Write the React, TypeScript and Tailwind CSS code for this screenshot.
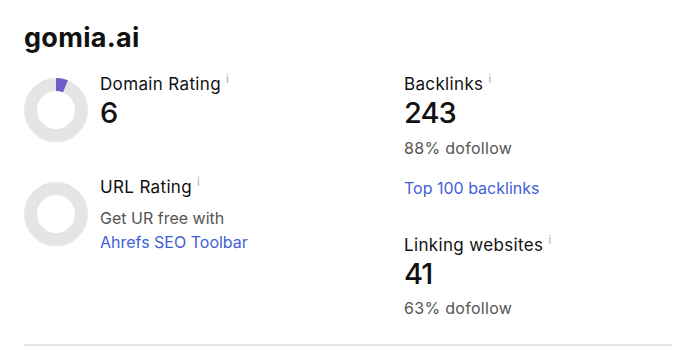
import React from "react";

function Donut({ value }: { value: number }) {
  const r = 25.5;
  const c = 2 * Math.PI * r;
  return (
    <svg width="64" height="64" viewBox="0 0 64 64" className="shrink-0">
      <circle cx="32" cy="32" r={r} fill="none" stroke="#e5e5e5" strokeWidth="13" />
      {value > 0 && (
        <circle
          cx="32"
          cy="32"
          r={r}
          fill="none"
          stroke="#6e5cc9"
          strokeWidth="13"
          strokeDasharray={`${(c * value) / 100} ${c}`}
          transform="rotate(-90 32 32)"
        />
      )}
    </svg>
  );
}

function Label({ children }: { children: React.ReactNode }) {
  return (
    <div className="flex items-start text-[17px] leading-6 tracking-[0.35px] text-[#111]">
      <span>{children}</span>
      <span className="ml-[5px] mt-[-1px] text-[11px] leading-4 text-[#aaa]">i</span>
    </div>
  );
}

export default function App() {
  return (
    <div className="h-[350px] w-[696px] bg-white px-6 pt-[22px]" style={{ fontFamily: "Inter, 'Noto Sans', sans-serif" }}>
      <h1 className="text-[27px] font-bold leading-8 tracking-[0.3px] text-[#111]">gomia.ai</h1>
      <div className="mt-[18px] flex">
        <div className="w-[380px]">
          <div className="flex gap-3">
            <div className="pt-[6px]"><Donut value={6} /></div>
            <div>
              <Label>Domain Rating</Label>
              <div className="mt-[1px] text-[29px] font-medium leading-8 tracking-[-1px] text-[#111]">6</div>
            </div>
          </div>
          <div className="mt-[33px] flex gap-3">
            <div className="pt-[7px]"><Donut value={0} /></div>
            <div>
              <Label>URL Rating</Label>
              <div className="mt-[7px] text-[16px] leading-6 text-[#555]">Get UR free with</div>
              <div className="text-[16px] leading-6 text-[#3f5fd6]">Ahrefs SEO Toolbar</div>
            </div>
          </div>
        </div>
        <div>
          <Label>Backlinks</Label>
          <div className="mt-[1px] text-[29px] font-medium leading-8 tracking-[-1px] text-[#111]">243</div>
          <div className="mt-[7px] text-[16px] leading-6 tracking-[0.3px] text-[#555]">88% dofollow</div>
          <div className="mt-[16px] text-[16px] leading-6 text-[#3f5fd6]">Top 100 backlinks</div>
          <div className="mt-[33px]">
            <Label>Linking websites</Label>
            <div className="mt-[1px] text-[29px] font-medium leading-8 tracking-[-1px] text-[#111]">41</div>
            <div className="mt-[6px] text-[16px] leading-6 tracking-[0.3px] text-[#555]">63% dofollow</div>
          </div>
        </div>
      </div>
      <div className="mt-[24px] h-[2px] bg-[#e6e6e6]" />
    </div>
  );
}
